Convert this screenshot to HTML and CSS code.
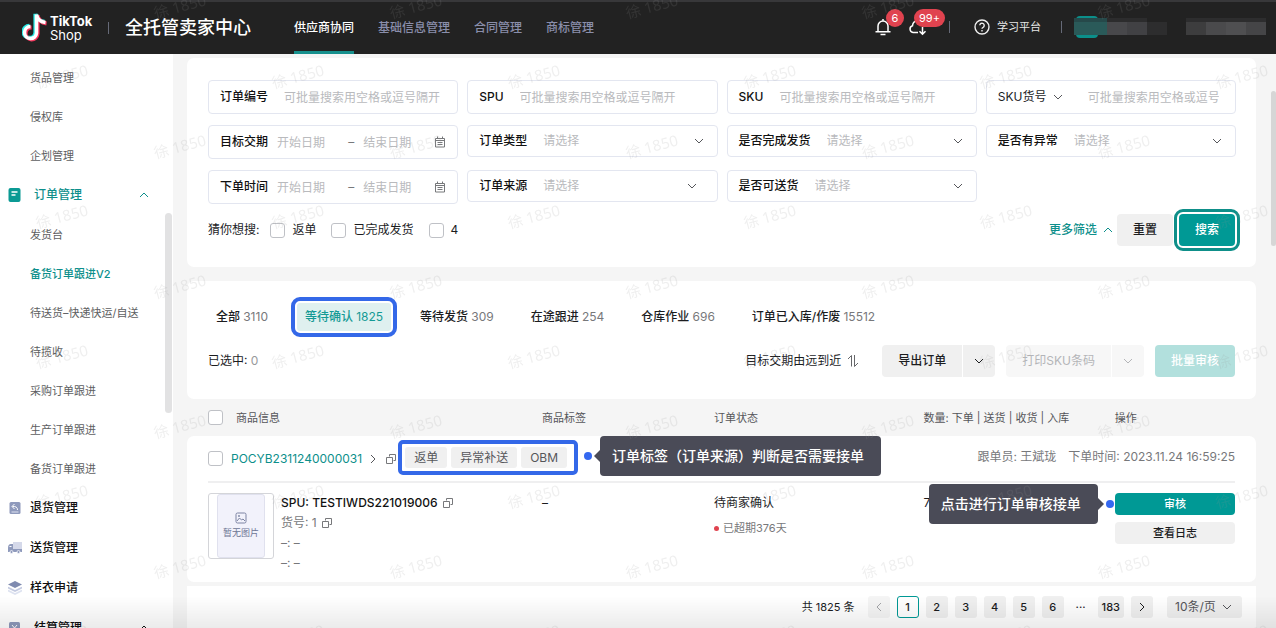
FILE: index.html
```html
<!DOCTYPE html>
<html lang="zh-CN">
<head>
<meta charset="utf-8">
<meta name="viewport" content="width=device-width, initial-scale=1">
<title>全托管卖家中心</title>
<link rel="stylesheet" href="styles.css">
</head>
<body>
<svg class="sprite" aria-hidden="true">
  <symbol id="down" viewBox="0 0 10 10"><path d="M1 3l4 4 4-4" fill="none" stroke="currentColor"/></symbol>
  <symbol id="up" viewBox="0 0 10 10"><path d="M1 7l4-4 4 4" fill="none" stroke="currentColor"/></symbol>
  <symbol id="left" viewBox="0 0 10 10"><path d="M7 1L3 5l4 4" fill="none" stroke="currentColor"/></symbol>
  <symbol id="right" viewBox="0 0 10 10"><path d="M3 1l4 4-4 4" fill="none" stroke="currentColor"/></symbol>
  <symbol id="copy" viewBox="0 0 12 12"><path d="M4.500 3.500V1.500h6v6h-2M1.500 4.500h6v6h-6z" fill="none" stroke="currentColor" stroke-linejoin="round"/></symbol>
  <symbol id="calendar" viewBox="0 0 12 12"><path d="M1.500 2.500h9v8.500h-9zM3.500 .5v2M8.500 .5v2M1.500 4.500h9M3.500 6.500h5M3.500 8.500h5" fill="none" stroke="currentColor"/></symbol>
</svg>

<header class="topbar">
  <a class="brand" href="#" aria-label="TikTok Shop">
    <svg width="26" height="30" viewBox="0 0 26 30" aria-hidden="true">
      <g fill="none" stroke-width="4">
        <path d="M14 1v18.500a6 6 0 1 1-6-6.500M14 1q1 7 9 8" stroke="#25e8e4" transform="translate(-.6 -.2)"/>
        <path d="M14 1v18.500a6 6 0 1 1-6-6.500M14 1q1 7 9 8" stroke="#f4355b" transform="translate(1.600 1.400)"/>
        <path d="M14.500 1.500v18.500a6 6 0 1 1-6-6.500M14.500 1.500q1 7 9 8" stroke="#fff" stroke-width="3.600"/>
      </g>
    </svg>
    <span class="wordmark"><b>TikTok</b><span>Shop</span></span>
  </a>
  <span class="sep"></span>
  <h1>全托管卖家中心</h1>
  <nav class="mainnav">
    <a class="on" href="#">供应商协同</a>
    <a href="#">基础信息管理</a>
    <a href="#">合同管理</a>
    <a href="#">商标管理</a>
  </nav>
  <div class="tools">
    <button class="tool" aria-label="通知">
      <svg width="16" height="18" viewBox="0 0 16 18" fill="none" stroke="#fff" stroke-width="1.500"><path d="M3 13.500V8a5 5 0 0 1 10 0v5.500M.5 13.800h15M5.500 16.500h5M8 3V1"/></svg>
      <span class="badge">6</span>
    </button>
    <button class="tool" aria-label="下载">
      <svg width="18" height="18" viewBox="0 0 18 18" fill="none" stroke="#fff" stroke-width="1.500"><path d="M9 14.500H4a3.500 3.500 0 0 1-.5-6.800A5.500 5.500 0 0 1 14 6M13.500 9v7M10.500 13.300l3 3 3-3"/></svg>
      <span class="badge wide">99+</span>
    </button>
    <span class="sep"></span>
    <a class="learn" href="#">
      <svg width="16" height="16" viewBox="0 0 16 16" fill="none" stroke="#eee" stroke-width="1.400"><circle cx="8" cy="8" r="7"/><path d="M5.800 6.300a2.200 2.200 0 1 1 3.300 2q-1.100.6-1.100 1.500M8 11v1.500"/></svg>
      学习平台</a>
    <span class="sep"></span>
    <svg class="account" width="194" height="24" viewBox="0 0 194 24" aria-hidden="true">
      <rect x="2" y="1" width="22" height="22" rx="4" fill="#0b8f8a"/>
      <path d="M0 3h33v17H0z" fill="#2a5a59"/><path d="M0 3h33v4H0z" fill="#26494a"/>
      <path d="M33 7h20v13H33z" fill="#48484b"/><path d="M53 7h20v13H53z" fill="#414144"/>
      <path d="M33 3h40v4H33z" fill="#2c2c2d"/><path d="M73 7h20v13H73z" fill="#2d2d2e"/>
      <path d="M112 7h20v13h-20z" fill="#3d3d3e"/><path d="M132 7h20v13h-20z" fill="#4a4a4c"/>
      <path d="M152 7h20v13h-20z" fill="#4f4f51"/><path d="M172 7h20v13h-20z" fill="#454547"/>
      <path d="M112 3h80v4h-80z" fill="#2d2d2e"/>
    </svg>
  </div>
</header>

<div class="body">
  <aside class="sidebar">
    <nav class="menu">
      <a href="#">货品管理</a>
      <a href="#">侵权库</a>
      <a href="#">企划管理</a>
      <a class="group open" href="#">
        <svg width="13" height="14" viewBox="0 0 13 14"><rect x=".5" width="12" height="14" rx="2" fill="#0b9a94"/><path d="M3.500 4h6M3.500 7h4" stroke="#fff" stroke-width="1.300"/></svg>
        <span>订单管理</span><svg class="i10 arrow"><use href="#up"/></svg></a>
      <a href="#">发货台</a>
      <a class="on" href="#">备货订单跟进V2</a>
      <a href="#">待送货–快递快运/自送</a>
      <a href="#">待揽收</a>
      <a href="#">采购订单跟进</a>
      <a href="#">生产订单跟进</a>
      <a href="#">备货订单跟进</a>
      <a class="group" href="#">
        <svg width="14" height="14" viewBox="0 0 14 14"><rect x="1.500" y="1" width="11" height="12" rx="1.500" fill="#8f9abc"/><path d="M6.500 3L4 5.500 6.500 8M4.500 5.500q5-.5 5 3.500" fill="none" stroke="#fff"/><path d="M3.500 11h7" stroke="#dfe3f2"/></svg>
        <span>退货管理</span></a>
      <a class="group" href="#">
        <svg width="14" height="14" viewBox="0 0 14 14"><path d="M5 1h9v7H5z" fill="#d5d9ea"/><path d="M0 7q0-4 3-4h2v5h9v3H0z" fill="#8f9abc"/><path d="M1.500 5.500h2" stroke="#fff"/><circle cx="3.500" cy="11" r="1.500" fill="#8f9abc" stroke="#fff" stroke-width=".7"/><circle cx="10.500" cy="11" r="1.500" fill="#8f9abc" stroke="#fff" stroke-width=".7"/></svg>
        <span>送货管理</span></a>
      <a class="group" href="#">
        <svg width="14" height="14" viewBox="0 0 14 14"><path d="M7 0l7 3.500L7 7 0 3.500z" fill="#7f8bb0"/><path d="M0 6.500L7 10l7-3.500" fill="none" stroke="#c3cae0" stroke-width="1.600"/><path d="M0 9.500L7 13l7-3.500" fill="none" stroke="#dde2f0" stroke-width="1.600"/></svg>
        <span>样衣申请</span></a>
      <a class="group open plain" href="#">
        <svg width="13" height="14" viewBox="0 0 13 14"><rect x="1" y="1" width="11" height="13" rx="1.500" fill="#8f9abc"/><path d="M4 4l2.500 3L9 4M6.500 7v4M4.500 7.500h4M4.500 9.500h4" fill="none" stroke="#fff"/></svg>
        <span>结算管理</span><svg class="i10 arrow"><use href="#up"/></svg></a>
    </nav>
    <span class="thumb side-thumb"></span>
  </aside>

  <main class="content">
    <section class="card filters">
      <form class="grid">
        <div class="field tall"><label for="f1">订单编号</label><input id="f1" placeholder="可批量搜索用空格或逗号隔开"></div>
        <div class="field tall"><label for="f2">SPU</label><input id="f2" placeholder="可批量搜索用空格或逗号隔开"></div>
        <div class="field tall"><label for="f3">SKU</label><input id="f3" placeholder="可批量搜索用空格或逗号隔开"></div>
        <div class="field tall kind">
          <span class="pick"><select aria-label="货号类型"><option>SKU货号</option></select><svg class="i10"><use href="#down"/></svg></span>
          <input aria-label="SKU货号" placeholder="可批量搜索用空格或逗号隔开"></div>

        <div class="field tall range"><label for="f5">目标交期</label><input id="f5" placeholder="开始日期"><span>–</span><input aria-label="目标交期结束日期" placeholder="结束日期"><svg class="i12"><use href="#calendar"/></svg></div>
        <div class="field"><label for="f6">订单类型</label><select id="f6"><option>请选择</option></select><svg class="i10"><use href="#down"/></svg></div>
        <div class="field"><label for="f7">是否完成发货</label><select id="f7"><option>请选择</option></select><svg class="i10"><use href="#down"/></svg></div>
        <div class="field"><label for="f8">是否有异常</label><select id="f8"><option>请选择</option></select><svg class="i10"><use href="#down"/></svg></div>

        <div class="field tall range"><label for="f9">下单时间</label><input id="f9" placeholder="开始日期"><span>–</span><input aria-label="下单时间结束日期" placeholder="结束日期"><svg class="i12"><use href="#calendar"/></svg></div>
        <div class="field inset"><label for="f10">订单来源</label><select id="f10"><option>请选择</option></select><svg class="i10"><use href="#down"/></svg></div>
        <div class="field"><label for="f11">是否可送货</label><select id="f11"><option>请选择</option></select><svg class="i10"><use href="#down"/></svg></div>
      </form>
      <div class="actions">
        <span>猜你想搜:</span>
        <label class="check"><input type="checkbox">返单</label>
        <label class="check"><input type="checkbox">已完成发货</label>
        <label class="check"><input type="checkbox">4</label>
        <a class="more" href="#">更多筛选<svg class="i10"><use href="#up"/></svg></a>
        <button class="btn reset">重置</button>
        <button class="btn primary ringed">搜索</button>
      </div>
    </section>

    <section class="card orders">
      <div class="tabs">
        <button>全部 <span>3110</span></button>
        <button class="on">等待确认 <span>1825</span></button>
        <button>等待发货 <span>309</span></button>
        <button>在途跟进 <span>254</span></button>
        <button>仓库作业 <span>696</span></button>
        <button>订单已入库/作废 <span>15512</span></button>
      </div>
      <div class="bulk">
        <span class="picked">已选中: <span>0</span></span>
        <button class="sort">目标交期由远到近<svg width="12" height="14" viewBox="0 0 12 14" fill="none" stroke="currentColor"><path d="M1 5l3.500-3.500V12.500M7.500 1v11.500L11 9"/></svg></button>
        <span class="split"><button class="btn">导出订单</button><button class="btn caret" aria-label="更多导出"><svg class="i10"><use href="#down"/></svg></button></span>
        <span class="split"><button class="btn off" disabled>打印SKU条码</button><button class="btn caret off" disabled aria-label="更多打印"><svg class="i10"><use href="#down"/></svg></button></span>
        <button class="btn primary faded" disabled>批量审核</button>
      </div>
    </section>

    <table class="list">
      <colgroup><col class="c1"><col class="c2"><col class="c3"><col class="c4"><col class="c5"></colgroup>
      <thead>
        <tr>
          <th><label class="check"><input type="checkbox">商品信息</label></th>
          <th>商品标签</th><th>订单状态</th><th>数量: 下单 | 送货 | 收货 | 入库</th><th>操作</th>
        </tr>
      </thead>
      <tbody>
        <tr class="head">
          <td colspan="5">
            <div class="order">
              <input type="checkbox" aria-label="选择订单">
              <a class="no" href="#">POCYB2311240000031</a>
              <svg class="i10 go"><use href="#right"/></svg>
              <svg class="i12 dup"><use href="#copy"/></svg>
              <span class="tags"><span>返单</span><span>异常补送</span><span>OBM</span>
                <span class="tip tip-right"><i></i>订单标签（订单来源）判断是否需要接单</span></span>
              <span class="meta"><span>跟单员: 王斌珑</span><span>下单时间: 2023.11.24 16:59:25</span></span>
            </div>
          </td>
        </tr>
        <tr class="row">
          <td>
            <div class="goods">
              <div class="photo"><div>
                <svg width="12" height="12" viewBox="0 0 12 12" fill="none" stroke="#7c84a3"><rect x="1" y="1" width="10" height="10" rx="1.500"/><path d="M2 9l2.500-3 2 2 1.500-1 2 2"/><circle cx="4" cy="4" r=".6"/></svg>
                暂无图片</div></div>
              <div class="info">
                <p class="spu">SPU: TESTIWDS221019006<svg class="i12"><use href="#copy"/></svg></p>
                <p>货号: 1<svg class="i12"><use href="#copy"/></svg></p>
                <p>–: –</p>
                <p>–: –</p>
              </div>
            </div>
          </td>
          <td>–</td>
          <td>待商家确认<div class="late">已超期376天</div></td>
          <td>7 |</td>
          <td>
            <div class="ops">
              <button class="btn primary small">审核</button>
              <button class="btn small">查看日志</button>
              <span class="tip tip-left"><i></i>点击进行订单审核接单</span>
            </div>
          </td>
        </tr>
      </tbody>
    </table>

    <nav class="pager" aria-label="分页">
      <span class="total">共 1825 条</span>
      <button class="dim" aria-label="上一页"><svg class="i10"><use href="#left"/></svg></button>
      <button class="on">1</button><button>2</button><button>3</button><button>4</button><button>5</button><button>6</button>
      <span class="dots">···</span>
      <button>183</button>
      <button aria-label="下一页"><svg class="i10"><use href="#right"/></svg></button>
      <span class="size"><select aria-label="每页条数"><option>10条/页</option></select><svg class="i10"><use href="#down"/></svg></span>
    </nav>
    <span class="thumb page-thumb"></span>
  </main>
</div>

<div class="shade"></div>
<svg class="watermark" aria-hidden="true">
  <defs>
    <pattern id="wm" width="236" height="140" patternUnits="userSpaceOnUse">
      <text x="62" y="82" transform="rotate(-15 62 77)">徐 1850</text>
      <text x="180" y="12" transform="rotate(-15 180 7)">徐 1850</text>
      <text x="180" y="152" transform="rotate(-15 180 147)">徐 1850</text>
    </pattern>
  </defs>
  <rect width="100%" height="100%" fill="url(#wm)"/>
</svg>
</body>
</html>
```
FILE: styles.css
```css
:root {
  --teal: #009995;
  --teal-text: #0d8f8b;
  --blue: #3468e8;
  --ink: #1c1d1f;
  --grey: #77787b;
  --line: #e3e6f0;
  --soft: #f0f0f0;
}

* { box-sizing: border-box; }

body {
  margin: 0;
  height: 100vh;
  overflow: hidden;
  display: flex;
  flex-direction: column;
  background: #f5f5f5;
  color: var(--ink);
  font: 12px/18px Inter, "Noto Sans CJK SC", sans-serif;
}

a { color: inherit; text-decoration: none; }
p { margin: 0; }
button, input, select { font: inherit; color: inherit; }
button { border: 0; padding: 0; background: none; white-space: nowrap; }
svg { flex: none; display: block; }
.sprite { position: absolute; width: 0; height: 0; }
.i10 { width: 10px; height: 10px; }
.i12 { width: 12px; height: 12px; }

input[type="checkbox"] {
  appearance: none;
  flex: none;
  width: 15px;
  height: 15px;
  margin: 0;
  border: 1px solid #bfc1c6;
  border-radius: 3px;
  background: #fff;
}

.check { display: flex; align-items: center; gap: 7px; }

/* Top bar */
.topbar {
  flex: none;
  height: 54px;
  display: flex;
  align-items: center;
  padding: 0 8px 0 22px;
  border-top: 2px solid #38383a;
  background: #222;
  color: #fff;
}
.brand { display: flex; align-items: center; gap: 2px; width: 86px; }
.wordmark { display: flex; flex-direction: column; font-size: 13px; line-height: 14px; }
.sep { flex: none; width: 1px; height: 12px; background: #666a78; }
.topbar h1 { margin: 0 0 0 16px; font-size: 18px; line-height: 26px; font-weight: 500; white-space: nowrap; }
.mainnav { align-self: stretch; display: flex; gap: 24px; margin-left: 43px; font-weight: 500; color: #8a8eab; }
.mainnav a { display: flex; align-items: center; padding-top: 2px; border-bottom: 3px solid transparent; white-space: nowrap; }
.mainnav .on { color: #fff; border-color: #17908d; }
.tools { margin-left: auto; display: flex; align-items: center; padding-bottom: 2px; }
.tool { position: relative; margin-right: 18px; }
.tool + .tool { margin-right: 22px; }
.badge {
  position: absolute;
  left: 11px;
  top: -9px;
  min-width: 18px;
  padding: 0 5px;
  border-radius: 9px;
  background: #e0434f;
  font-size: 11px;
  line-height: 18px;
  text-align: center;
}
.badge.wide { left: 5px; }
.learn { display: flex; align-items: center; gap: 7px; margin: 0 20px 0 24px; font-size: 11px; color: #e6e6e6; }
.account { margin-left: 12px; }

/* Side menu */
.body { flex: 1; min-height: 0; display: flex; }
.sidebar { flex: none; position: relative; width: 173px; background: #fff; overflow: hidden; }
.menu { padding-top: 4px; font-size: 11px; color: #5d5e61; }
.menu a { display: flex; align-items: center; height: 39px; padding-left: 30px; }
.menu .on { color: var(--teal-text); font-weight: 500; }
.menu .group { height: 40px; gap: 8px; padding: 0 24px 0 8px; font-size: 12px; font-weight: 500; color: #111; }
.menu .open { gap: 13px; color: var(--teal-text); }
.menu .plain { color: #111; }
.arrow { margin-left: auto; }
.thumb { position: absolute; border-radius: 4px; background: #e2e2e3; }
.side-thumb { right: 1px; top: 159px; width: 7px; height: 200px; }
.page-thumb { right: 0; top: 37px; width: 5px; height: 155px; background: #d6d6d6; }

/* Cards */
.content { flex: 1; min-width: 0; position: relative; padding: 4px 20px 0 14px; }
.card { border-radius: 7px; background: #fff; padding: 0 20px 0 21px; }
.filters { padding-top: 22px; padding-bottom: 18px; }
.grid { display: grid; grid-template-columns: repeat(4, minmax(0, 1fr)); grid-auto-rows: 34px; gap: 11px 9px; align-items: start; }
.field {
  display: flex;
  align-items: center;
  gap: 16px;
  height: 32px;
  padding: 0 13px 0 11px;
  border: 1px solid var(--line);
  border-radius: 4px;
  background: #fff;
}
.field.tall { height: 34px; }
.field.inset { padding-right: 20px; }
.field label { flex: none; font-weight: 500; color: #111; }
.field input, .field select {
  flex: 1;
  min-width: 0;
  width: 0;
  height: 24px;
  padding: 0;
  border: 0;
  outline: 0;
  background: none;
  appearance: none;
  color: #b9babd;
}
.field input::placeholder { color: #b9babd; opacity: 1; }
.field svg { color: #55565a; }
.range { gap: 9px; padding-right: 11px; }
.range svg, .range span { color: #77787b; }
.field.kind { gap: 25px; padding-right: 16px; }
.pick { display: flex; align-items: center; gap: 6px; }
.field .pick select { flex: none; width: auto; color: var(--ink); }

.actions { display: flex; align-items: center; height: 38px; margin-top: 7px; }
.actions .check { margin-right: 15px; }
.actions > span { margin-right: 11px; }
.more { display: flex; align-items: center; gap: 6px; margin-left: auto; margin-right: 4px; color: var(--teal-text); font-weight: 500; }

.btn {
  height: 32px;
  padding: 0 16px;
  border-radius: 4px;
  background: var(--soft);
  font-weight: 500;
}
.btn.primary { background: var(--teal); color: #fff; }
.btn.ringed { margin: 0 1px 0 6px; outline: 3px solid #0e8f89; outline-offset: 2px; }
.btn.faded { margin-right: 1px; background: #b2e0dd; }
.btn.off { background: #f7f7f7; color: #b4b5b8; font-weight: 400; }
.btn.small { height: 22px; padding: 0; font-size: 11px; }
.btn.caret { width: 32px; padding: 0 11px; }

.orders { margin-top: 14px; padding-top: 22px; padding-bottom: 22px; }
.tabs { display: flex; gap: 21px; }
.tabs button { height: 28px; padding: 0 8px; border-radius: 3px; font-weight: 500; }
.tabs button span { font-weight: 400; color: var(--grey); }
.tabs .on, .tabs .on span { background: #dff0ef; color: #149a95; }
.tabs .on { outline: 4px solid var(--blue); outline-offset: 2px; }
.bulk { display: flex; align-items: center; gap: 11px; margin-top: 14px; }
.picked { margin-right: auto; }
.picked span { color: #97989b; }
.sort { display: flex; align-items: center; gap: 6px; margin-right: 12px; }
.sort svg { color: #66676a; }
.split { display: flex; gap: 1px; }
.split .btn:first-child { border-radius: 4px 0 0 4px; }
.split .btn:last-child { border-radius: 0 4px 4px 0; }

/* Order list */
.list { width: 100%; table-layout: fixed; border-collapse: separate; border-spacing: 0; }
.c1 { width: 33.2%; }
.c2 { width: 16.1%; }
.c3 { width: 19.6%; }
.c4 { width: 17.9%; }
.c5 { width: 13.2%; }
.list th { height: 37px; padding: 0; font-size: 11px; font-weight: 400; text-align: left; color: #55565a; }
.list th:first-child { padding-left: 21px; }
.list th .check { gap: 13px; }
.list td { padding: 0; background: #fff; vertical-align: top; }
.head td { padding: 0 21px; border-radius: 7px 7px 0 0; }
.order { display: flex; align-items: center; height: 47px; border-bottom: 2px solid #efeff0; }
.no { margin: 0 6px 0 8px; color: var(--teal-text); }
.go { color: #55565a; }
.dup { margin: 0 1px 0 7px; color: #77787b; }
.tags {
  position: relative;
  display: flex;
  gap: 4px;
  padding: 3px 7px 3px 3px;
  border: 4px solid var(--blue);
  border-radius: 5px;
  margin-bottom: 2px;
  color: #55565a;
}
.tags > span:not(.tip) { padding: 0 9px; border-radius: 3px; background: var(--soft); line-height: 21px; white-space: nowrap; }
.meta { display: flex; gap: 12px; margin-left: auto; margin-bottom: 4px; color: var(--grey); white-space: nowrap; }
.row td { height: 99px; padding-top: 10px; line-height: 20px; }
.row td:first-child { padding-left: 21px; border-radius: 0 0 0 7px; }
.row td:last-child { padding-right: 21px; border-radius: 0 0 7px 0; }
.goods { display: flex; gap: 7px; }
.photo { flex: none; width: 66px; height: 66px; padding: 0 8px; border: 1px solid #d4d5d9; border-radius: 3px; }
.photo div {
  height: 64px;
  display: flex;
  flex-direction: column;
  align-items: center;
  justify-content: center;
  gap: 2px;
  border: 1px solid #e0e1ee;
  border-radius: 3px;
  background: #f2f2fb;
  font-size: 9px;
  line-height: 14px;
  color: #6d7594;
  white-space: nowrap;
}
.info { color: var(--grey); }
.info p { display: flex; align-items: center; gap: 4px; white-space: nowrap; }
.info .spu { color: #111; font-weight: 500; }
.info svg { color: #77787b; }
.late { display: flex; align-items: center; gap: 4px; margin-top: 5px; font-size: 11px; color: var(--grey); }
.late::before { content: ""; width: 5px; height: 5px; border-radius: 50%; background: #e0434f; }
.ops { position: relative; display: flex; flex-direction: column; gap: 7px; }

/* Callouts pinned beside the part they explain */
.tip {
  position: absolute;
  z-index: 1;
  padding: 10px 17px 10px 12px;
  border-radius: 4px;
  background: #4a4b57;
  color: #fff;
  font-size: 14px;
  line-height: 20px;
  font-weight: 500;
  white-space: nowrap;
}
.tip::before { content: ""; position: absolute; top: 14px; border: 6px solid transparent; }
.tip i { position: absolute; top: 16px; width: 8px; height: 8px; border-radius: 50%; background: #3468f0; }
.tip-right { left: calc(100% + 26px); top: -8px; }
.tip-right::before { right: 100%; border-right-color: #4a4b57; }
.tip-right i { left: -16px; }
.tip-left { right: calc(100% + 17px); top: -9px; }
.tip-left::before { left: 100%; border-left-color: #4a4b57; }
.tip-left i { right: -16px; }

/* Pager */
.pager {
  display: flex;
  align-items: center;
  justify-content: flex-end;
  gap: 7px;
  margin-top: 4px;
  padding: 10px 14px 14px;
  background: #fff;
  font-size: 11px;
}
.pager button { display: flex; align-items: center; justify-content: center; min-width: 22px; height: 22px; padding: 0 4px; border-radius: 3px; background: var(--soft); font-weight: 500; }
.pager .dim { color: #a5a6a9; background: #f5f5f5; }
.pager .on { border: 1px solid var(--teal); background: #fff; }
.total { margin-right: 6px; }
.dots { width: 20px; text-align: center; font-weight: 500; }
.size { display: flex; align-items: center; gap: 6px; height: 22px; margin-left: 7px; padding: 0 10px 0 8px; border-radius: 3px; background: var(--soft); font-size: 12px; color: #55565a; }
.size select { appearance: none; border: 0; padding: 0; background: none; }

.shade { position: fixed; inset: auto 0 0 0; height: 32px; background: linear-gradient(transparent, rgba(0, 0, 0, .08)); pointer-events: none; }
.watermark { position: fixed; inset: 0; width: 100%; height: 100%; pointer-events: none; z-index: 2; }
.watermark text { font: 15px "Noto Sans", "Noto Sans CJK SC", sans-serif; fill: rgba(150, 150, 150, .15); text-anchor: middle; }
```
